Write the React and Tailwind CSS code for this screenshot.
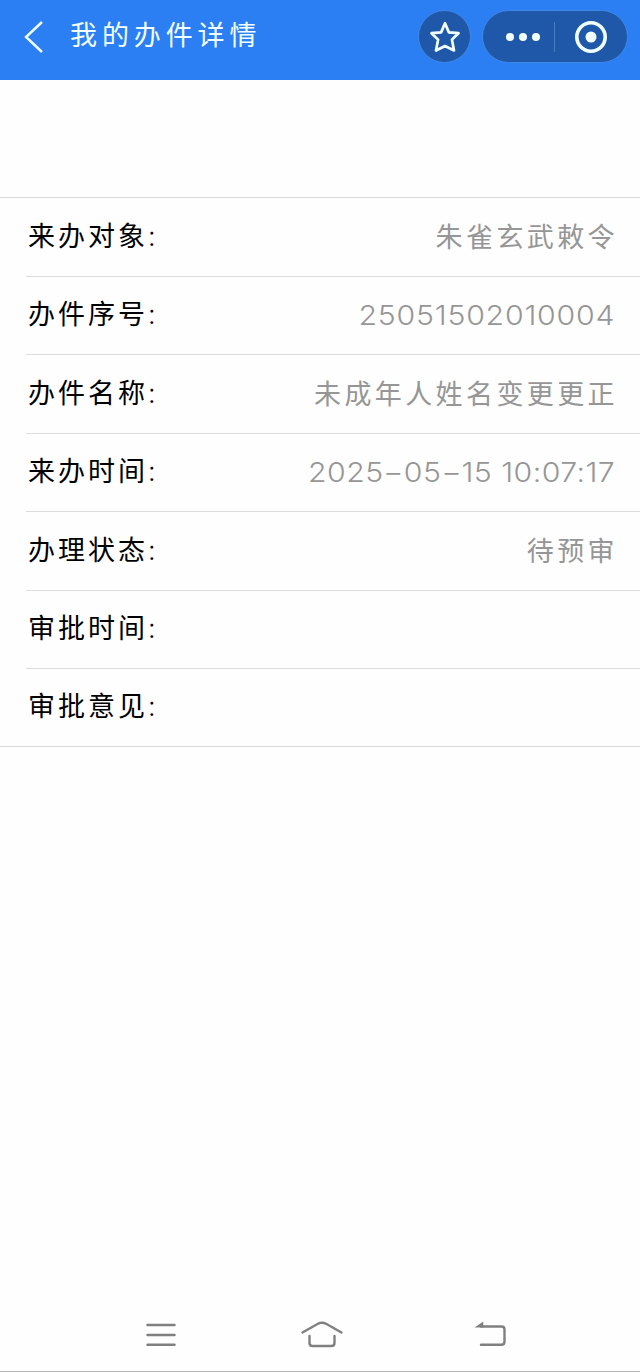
const rows = [
  { label: '来办对象', value: '朱雀玄武敕令', kind: 'cjk' },
  { label: '办件序号', value: '25051502010004', kind: 'num' },
  { label: '办件名称', value: '未成年人姓名变更更正', kind: 'cjk' },
  { label: '来办时间', value: '2025-05-15 10:07:17', kind: 'date' },
  { label: '办理状态', value: '待预审', kind: 'cjk' },
  { label: '审批时间', value: '', kind: 'cjk' },
  { label: '审批意见', value: '', kind: 'cjk' },
];

const valueClass = {
  cjk: 'text-[27px] tracking-[3.4px] -mr-[3px]',
  num: "font-['Inter'] font-light text-[27px] tracking-[0.7px] origin-right scale-x-[1.12] pt-[3px]",
  date: "font-['Inter'] font-light text-[27px] tracking-[0.4px] origin-right scale-x-[1.12] pt-[3px]",
};

function Value({ kind, text }) {
  return (
    <span className={`text-[#969696] ${valueClass[kind]}`}>
      {kind === 'date'
        ? text.split(/(-)/).map((part, i) =>
            part === '-' ? (
              <span key={i} className="inline-block w-[18px] scale-x-[1.5] text-center tracking-normal">-</span>
            ) : (
              part
            ),
          )
        : text}
    </span>
  );
}

function Header() {
  return (
    <header className="flex h-20 items-start bg-[#2b7ff3] pl-6 pr-3 pt-[10px] text-[#f2ffff]">
      <svg className="mt-[11px] h-8 w-5" viewBox="0 0 20 32" fill="none" stroke="currentColor" strokeWidth="2.4">
        <path d="M18 1 2 16 18 31" />
      </svg>
      <h1 className="ml-[26px] mt-[6px] text-[27px] leading-9 tracking-[4.9px]">我的办件详情</h1>
      <div className="ml-auto flex gap-[11px]">
        <button className="flex size-[53px] items-center justify-center rounded-full border border-[#3f88e6] bg-[#1f58a9]">
          <svg className="size-8" viewBox="0 0 32 32" fill="none" stroke="currentColor" strokeWidth="2.7" strokeLinejoin="round">
            <path d="M16 2.2 19.9 11.4 29.5 12.2 22.9 18.6 25 29.5 16 25 7 29.5 9.1 18.6 2.5 12.2 12.1 11.4Z" />
          </svg>
        </button>
        <div className="flex h-[53px] w-[146px] items-center rounded-full border border-[#3f88e6] bg-[#1f58a9]">
          <div className="flex w-[71px] justify-end gap-[5px] pr-[14px]">
            <i className="size-2 rounded-full bg-[#f2ffff]" />
            <i className="size-2 rounded-full bg-[#f2ffff]" />
            <i className="size-2 rounded-full bg-[#f2ffff]" />
          </div>
          <i className="h-[30px] w-px bg-[#4a7cc0]" />
          <svg className="ml-[19px] size-[34px]" viewBox="0 0 34 34" fill="none">
            <circle cx="17" cy="17" r="14.2" stroke="currentColor" strokeWidth="3.6" />
            <circle cx="17" cy="17" r="5.5" fill="currentColor" />
          </svg>
        </div>
      </div>
    </header>
  );
}

export default function App() {
  return (
    <div className="flex h-[1372px] w-[640px] flex-col border-b border-[#b5b5b5] bg-[#fefefe] font-['Noto_Sans_CJK_SC',sans-serif]">
      <Header />
      <main className="mt-[117px] border-y border-[#d9d9d9] pl-[26px]">
        {rows.map(({ label, value, kind }) => (
          <div key={label} className="flex h-[78.5px] items-center justify-between border-b border-[#dcdcdc] pb-[2px] pl-[2px] pr-[25px] whitespace-nowrap last:h-[77px] last:border-b-0">
            <span className="text-[27px] tracking-[3px] text-black">
              {label}<span className="font-['Inter'] font-light">:</span>
            </span>
            <Value kind={kind} text={value} />
          </div>
        ))}
      </main>
      <nav className="mt-auto flex h-[72px] items-center pl-[145px] text-[#808080]">
        <svg className="h-7 w-8" viewBox="0 0 32 28" stroke="currentColor" strokeWidth="2.5" strokeLinecap="round">
          <path d="M2.5 4h27M2.5 14h27M2.5 23.8h27" />
        </svg>
        <svg className="ml-[123px] h-7 w-11" viewBox="0 0 44 28" fill="none" stroke="currentColor" strokeWidth="2.4" strokeLinecap="round" strokeLinejoin="round">
          <path d="M2.5 11.5 17.5 3q4.500-2.500 9 0L41.500 11.500M9.500 15v7q0 3 3 3h19q3 0 3-3v-7" />
        </svg>
        <svg className="ml-[129px] h-7 w-9" viewBox="0 0 36 28" fill="none" stroke="currentColor" strokeWidth="2.4" strokeLinecap="round">
          <path d="M8 5.500h20.500q3 0 3 3v12.300q0 3-3 3H8" />
          <path d="M1.500 6.600 10.300.500v6.100Z" fill="currentColor" stroke="none" />
        </svg>
      </nav>
    </div>
  );
}
